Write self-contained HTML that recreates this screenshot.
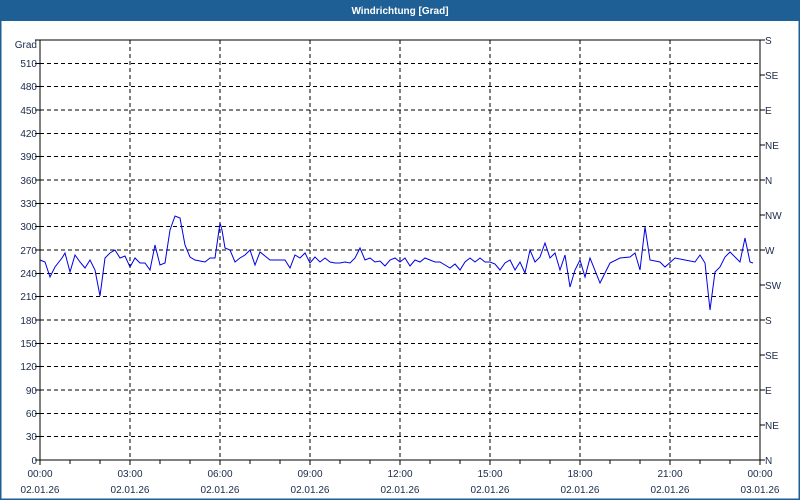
<!DOCTYPE html>
<html><head><meta charset="utf-8"><style>
html,body{margin:0;padding:0;width:800px;height:500px;overflow:hidden;background:#fff}
</style></head><body>
<svg width="800" height="500" xmlns="http://www.w3.org/2000/svg" font-family="Liberation Sans, sans-serif" font-size="10">
<rect x="0" y="0" width="800" height="500" fill="#fff"/>
<rect x="0.5" y="0.5" width="799" height="499" fill="none" stroke="#1e5f96" stroke-width="2"/>
<rect x="0" y="0" width="800" height="21" fill="#1e5f96"/>
<text x="400" y="14" fill="#fff" font-weight="bold" text-anchor="middle">Windrichtung [Grad]</text>
<g stroke="#000" stroke-dasharray="4,3" stroke-width="1" shape-rendering="crispEdges">
<line x1="40" y1="63.3" x2="760" y2="63.3"/><line x1="40" y1="86.7" x2="760" y2="86.7"/><line x1="40" y1="110" x2="760" y2="110"/><line x1="40" y1="133.3" x2="760" y2="133.3"/><line x1="40" y1="156.7" x2="760" y2="156.7"/><line x1="40" y1="180" x2="760" y2="180"/><line x1="40" y1="203.3" x2="760" y2="203.3"/><line x1="40" y1="226.7" x2="760" y2="226.7"/><line x1="40" y1="250" x2="760" y2="250"/><line x1="40" y1="273.3" x2="760" y2="273.3"/><line x1="40" y1="296.7" x2="760" y2="296.7"/><line x1="40" y1="320" x2="760" y2="320"/><line x1="40" y1="343.3" x2="760" y2="343.3"/><line x1="40" y1="366.7" x2="760" y2="366.7"/><line x1="40" y1="390" x2="760" y2="390"/><line x1="40" y1="413.3" x2="760" y2="413.3"/><line x1="40" y1="436.7" x2="760" y2="436.7"/>
<line x1="130" y1="40" x2="130" y2="460"/><line x1="220" y1="40" x2="220" y2="460"/><line x1="310" y1="40" x2="310" y2="460"/><line x1="400" y1="40" x2="400" y2="460"/><line x1="490" y1="40" x2="490" y2="460"/><line x1="580" y1="40" x2="580" y2="460"/><line x1="670" y1="40" x2="670" y2="460"/>
</g>
<rect x="40" y="40" width="720" height="420" fill="none" stroke="#000" stroke-width="1" shape-rendering="crispEdges"/>
<g stroke="#000" shape-rendering="crispEdges">
<path d="M35 40H40M35 63.3H40M35 86.7H40M35 110H40M35 133.3H40M35 156.7H40M35 180H40M35 203.3H40M35 226.7H40M35 250H40M35 273.3H40M35 296.7H40M35 320H40M35 343.3H40M35 366.7H40M35 390H40M35 413.3H40M35 436.7H40M35 460H40"/>
<path d="M760 40H765M760 75H765M760 110H765M760 145H765M760 180H765M760 215H765M760 250H765M760 285H765M760 320H765M760 355H765M760 390H765M760 425H765M760 460H765"/>
<path d="M40 460V465M70 460V464M100 460V464M130 460V465M160 460V464M190 460V464M220 460V465M250 460V464M280 460V464M310 460V465M340 460V464M370 460V464M400 460V465M430 460V464M460 460V464M490 460V465M520 460V464M550 460V464M580 460V465M610 460V464M640 460V464M670 460V465M700 460V464M730 460V464M760 460V465"/>
</g>
<g fill="#1a2a4a" text-anchor="end">
<text x="37" y="48">Grad</text>
<text x="37" y="67">510</text><text x="37" y="90">480</text><text x="37" y="114">450</text><text x="37" y="137">420</text><text x="37" y="160">390</text><text x="37" y="184">360</text><text x="37" y="207">330</text><text x="37" y="230">300</text><text x="37" y="254">270</text><text x="37" y="277">240</text><text x="37" y="300">210</text><text x="37" y="324">180</text><text x="37" y="347">150</text><text x="37" y="370">120</text><text x="37" y="394">90</text><text x="37" y="417">60</text><text x="37" y="440">30</text><text x="37" y="464">0</text>
</g>
<g fill="#1a2a4a">
<text x="765" y="44">S</text><text x="765" y="79">SE</text><text x="765" y="114">E</text><text x="765" y="149">NE</text><text x="765" y="184">N</text><text x="765" y="219">NW</text><text x="765" y="254">W</text><text x="765" y="289">SW</text><text x="765" y="324">S</text><text x="765" y="359">SE</text><text x="765" y="394">E</text><text x="765" y="429">NE</text><text x="765" y="464">N</text>
</g>
<g fill="#1a2a4a" text-anchor="middle">
<text x="40" y="477">00:00</text><text x="130" y="477">03:00</text><text x="220" y="477">06:00</text><text x="310" y="477">09:00</text><text x="400" y="477">12:00</text><text x="490" y="477">15:00</text><text x="580" y="477">18:00</text><text x="670" y="477">21:00</text><text x="760" y="477">00:00</text>
<text x="40" y="493">02.01.26</text><text x="130" y="493">02.01.26</text><text x="220" y="493">02.01.26</text><text x="310" y="493">02.01.26</text><text x="400" y="493">02.01.26</text><text x="490" y="493">02.01.26</text><text x="580" y="493">02.01.26</text><text x="670" y="493">02.01.26</text><text x="760" y="493">03.01.26</text>
</g>
<polyline fill="none" stroke="#0000e0" stroke-width="1" points="40,260 45,262 50,277 55,267 62,258 65,253 70,272 75,255 80,262 85,268 90,260 95,270 100,296 105,258 110,253 115,250 120,258 125,256 130,267 135,258 140,263 145,263 150,270 155,245 160,265 165,263 170,230 175,216 180,218 185,245 190,257 195,260 200,261 205,262 210,258 215,258 220,223 222,230 225,248 230,250 235,262 240,258 245,255 250,250 255,265 260,252 265,256 270,260 280,260 285,260 290,268 295,255 300,258 305,253 310,263 315,257 320,262 325,258 330,262 335,263 340,263 345,262 350,263 355,258 360,248 365,260 370,258 375,262 380,261 385,266 390,260 395,258 400,262 405,258 410,266 415,260 420,262 425,258 430,260 435,262 440,262 445,265 450,268 455,264 460,270 465,262 470,258 475,262 480,258 485,262 490,262 495,264 500,270 505,263 510,260 515,270 520,262 525,273 530,250 535,262 540,257 545,243 550,258 555,253 560,270 565,255 570,287 575,270 580,260 585,277 590,258 600,283 610,263 620,258 630,257 635,253 640,270 645,227 650,260 660,262 665,267 675,258 685,260 695,262 700,255 705,263 710,310 715,272 720,267 725,257 730,252 740,262 745,238 750,262 753,263"/>
</svg>
</body></html>
